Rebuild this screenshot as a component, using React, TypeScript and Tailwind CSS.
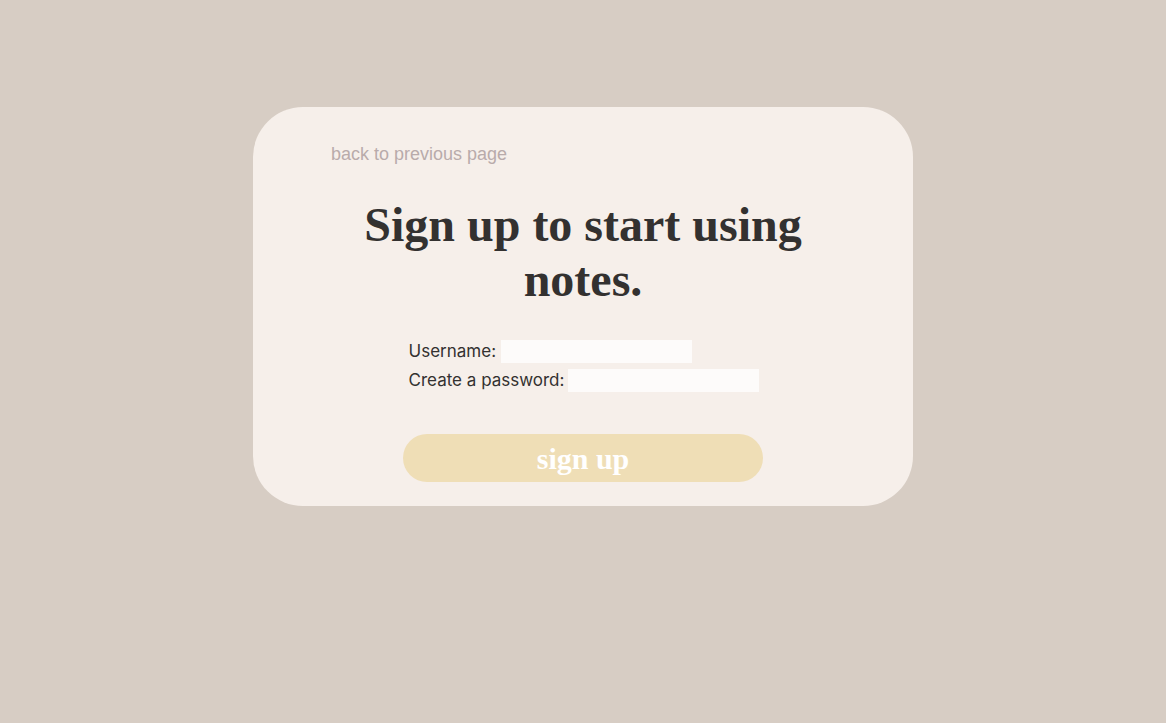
export default function App() {
  return (
    <div className="min-h-screen w-full bg-[#d7cdc4] pt-[107px]">
      <div className="mx-auto flex w-[660px] flex-col rounded-[50px] bg-[#f6efea] pb-[24px] pt-[37px]">
        <a
          href="#"
          className="ml-[78px] self-start font-['Liberation_Sans',Arial,sans-serif] text-[18px] leading-[21px] text-[#b9abab]"
        >
          back to previous page
        </a>
        <h1 className="mx-auto mt-[32px] w-[480px] text-center font-['Liberation_Serif','Times_New_Roman',serif] text-[48px] font-bold leading-[55px] text-[#333130]">
          Sign up to start using notes.
        </h1>
        <form className="mx-auto mt-[33px] flex flex-col gap-[6px] pl-[2px] font-['Inter',sans-serif] text-[17px] text-[#333130]">
          <label className="flex h-[23px] items-center gap-[5px]">
            Username:
            <input type="text" className="h-[23px] w-[191px] bg-[#fdfbfa] outline-none" />
          </label>
          <label className="flex h-[23px] items-center gap-[4px]">
            Create a password:
            <input type="password" className="h-[23px] w-[191px] bg-[#fdfbfa] outline-none" />
          </label>
        </form>
        <button
          type="button"
          className="mx-auto mt-[42px] h-[48px] w-[360px] rounded-full bg-[#efdeb6] font-['Liberation_Serif','Times_New_Roman',serif] text-[30px] font-bold text-white"
        >
          sign up
        </button>
      </div>
    </div>
  );
}
